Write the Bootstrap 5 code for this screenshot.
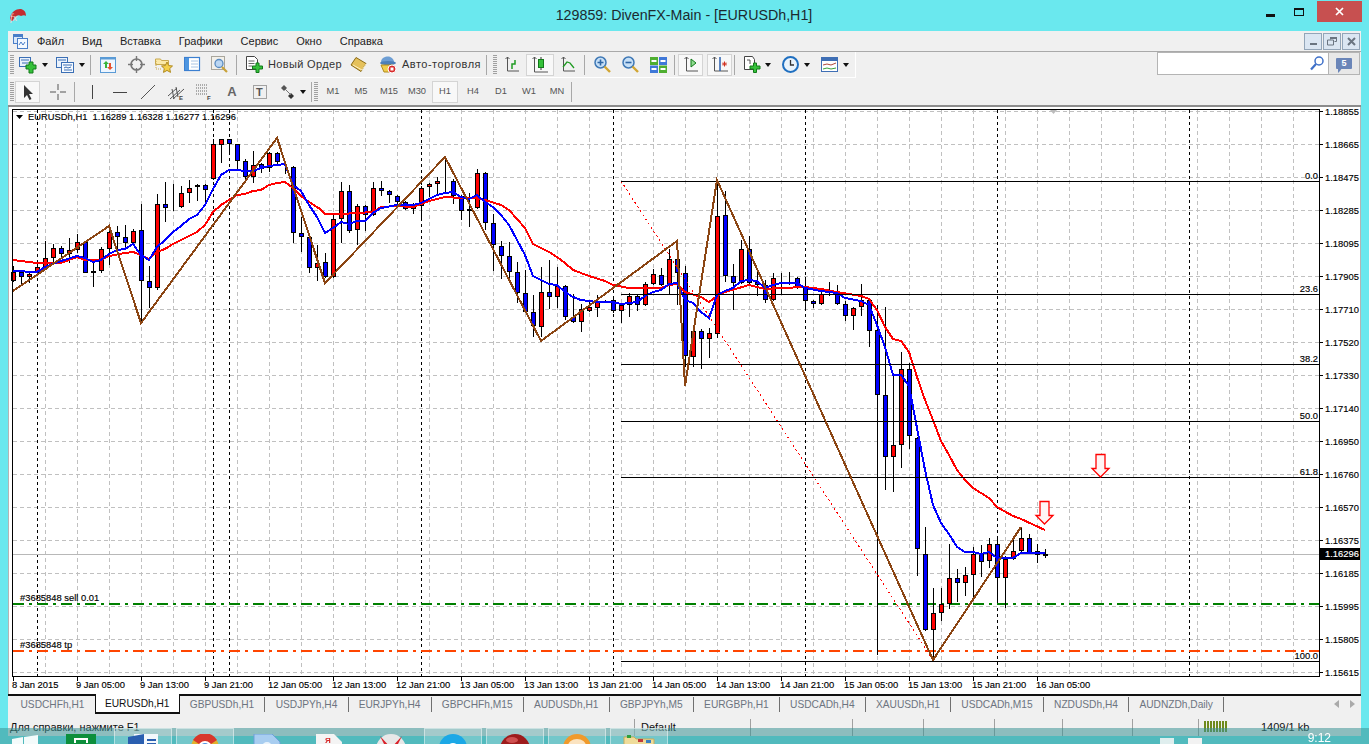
<!DOCTYPE html>
<html lang="ru">
<head>
<meta charset="UTF-8">
<title>129859: DivenFX-Main - [EURUSDh,H1]</title>
<link rel="stylesheet" href="https://cdn.jsdelivr.net/npm/bootstrap@5.3.0/dist/css/bootstrap.min.css">
<style>
  html, body { height: 744px; overflow: hidden; }
  body { background: #6ae8ee; font-family: "Liberation Sans", sans-serif; font-size: 11px; color: #222; }
  svg { display: block; flex: none; }

  .titlebar { height: 31px; position: relative; }
  .titlebar .logo { margin-left: 9px; margin-top: 9px; }
  .titlebar .caption { position: absolute; top: 5px; left: 0; right: 1px; text-align: center; font-size: 14.25px; line-height: 20px; color: #1c2a30; }
  .win-ctl { margin-left: auto; margin-right: 7px; height: 21px; margin-top: 1px; }
  .win-ctl span { display: flex; align-items: center; justify-content: center; }
  .win-ctl .min { width: 27px; padding-top: 7px; }
  .win-ctl .max { width: 29px; }
  .win-ctl .cls { width: 45px; background: #c75050; margin-left: 4px; }

  .mainwin { margin-left: 8px; width: 1353px; background: #f0f0f0; }
  .menubar { height: 21px; border-bottom: 1px solid #a9a9a9; padding-left: 5px; }
  .menubar a { color: #222; text-decoration: none; font-size: 11px; margin-left: 18px; }
  .menubar a:first-of-type { margin-left: 9px; }
  .mdi { margin-right: 1px; }
  .mdi span { width: 18px; height: 17px; margin-left: 1px; background: #dbe6f2; border: 1px solid #93a5b8; display: flex; align-items: center; justify-content: center; }

  .tbrow { height: 27px; }
  .tbrow.second { height: 28px; border-bottom: 2px solid #8c8c8c; }
  .toolbar { height: 26px; padding-right: 3px; border-right: 1px solid #fff; border-bottom: 1px solid #fff; }
  .grip { width: 4px; height: 20px; margin: 0 1px 0 2px; background: repeating-linear-gradient(#a0a0a0 0 1px, transparent 1px 2px); flex: none; }
  .sep { width: 1px; height: 20px; background: #a8a8a8; margin: 0 2px; flex: none; }
  .sep + .grip { margin-left: 0; }
  .tbtn { width: 28px; height: 22px; background: none; border: 0; padding: 0; border-radius: 0; display: flex; align-items: center; justify-content: center; color: #333; font-size: 11px; flex: none; }
  .sep + .tbtn { margin-left: 1px; }
  .tbtn.pressed { background: #f8f8f8; outline: 1px solid #d4d4d4; outline-offset: -1px; }
  .tbtn.wide { width: auto; gap: 5px; padding: 0 3px; letter-spacing: .35px; }
  .tbtn.wide.auto { letter-spacing: .5px; margin-left: 3px; }
  .tbtn.w20 { width: 20px; }
  .tbtn.w22 { width: 22px; }
  .tbtn.w24 { width: 24px; }
  .tbtn.w25 { width: 25px; }
  .tbtn.tf { width: 26px; margin: 0 1px; color: #555; font-size: 9.3px; }
  .tf + .sep { margin-left: 0; }
  .tbtn .letter { font-size: 13px; color: #666; font-weight: 700; }
  .dd { width: 6px; height: 4px; border: 3px solid transparent; border-top: 4px solid #111; border-bottom: 0; margin-left: 2px; margin-right: 3px; flex: none; box-sizing: border-box; }
  .dd.tight { margin-left: -2px; }

  .searchbox { width: 172px; height: 23px; background: #fff; border: 1px solid #b4b4b4; }
  .msgbtn { width: 31px; height: 23px; background: #e8e8e8; border: 1px solid #b4b4b4; border-left: 0; margin-right: 1px; }
  .msgbtn span { width: 16px; height: 11px; background: #6a85b8; color: #fff; font-size: 9px; line-height: 11px; text-align: center; border-radius: 1px; position: relative; font-weight: 700; }
  .msgbtn span::after { content: ""; position: absolute; left: 2px; bottom: -4px; border: 2px solid transparent; border-top: 3px solid #6a85b8; border-left: 2px solid #6a85b8; }

  .chart { background: #fff; border-left: 1px solid #b4b4b4; border-right: 1px solid #b4b4b4; height: 587px; }
  .chart text { font-family: "Liberation Sans", sans-serif; font-size: 9.4px; fill: #000; stroke: #000; stroke-width: .15px; }
  .chart text.inv { fill: #fff; stroke: #fff; }
  .chart .crisp { shape-rendering: crispEdges; }

  .symtabs { height: 20px; border-top: 2px solid #111; background: #f0f0f0; padding-left: 2px; flex-wrap: nowrap; }
  .symtabs .nav-link { padding: 0 10.2px; height: 15px; margin-top: 1px; line-height: 15px; color: #6d7480; font-size: 10.2px; border-right: 1px solid #707070; border-radius: 0; }
  .symtabs .nav-link.plain { border-right: 0; padding-left: 10.5px; padding-right: 10.5px; }
  .symtabs .nav-link.active { color: #111; background: #fff; height: 20px; margin-top: -2px; line-height: 20px; padding: 0 9px; border: 1px solid #111; border-top: 0; border-bottom-width: 2px; }
  .symtabs .arrows { margin-left: auto; margin-right: 6px; gap: 11px; height: 16px; }
  .symtabs .arrows i { width: 0; height: 0; border: 4px solid transparent; }
  .symtabs .arrows i.l { border-right: 5px solid #aaa; border-left: 0; }
  .symtabs .arrows i.r { border-left: 5px solid #aaa; border-right: 0; }

  .statusbar { height: 22px; position: relative; font-size: 11px; }
  .statusbar > div { height: 17px; margin-top: 5px; border-right: 1px solid #a0a0a0; padding-left: 6px; line-height: 16px; flex: none; white-space: nowrap; color: #111; }
  .statusbar > div:nth-child(1) { width: 627px; padding-left: 2px; }
  .statusbar > div:nth-child(2) { width: 116px; }
  .statusbar > div:nth-child(3) { width: 102px; }
  .statusbar > div:nth-child(4), .statusbar > div:nth-child(5) { width: 71px; }
  .statusbar > div:nth-child(6) { width: 68px; }
  .statusbar > div:nth-child(7) { width: 70px; }
  .statusbar > div:nth-child(8) { width: 66px; }
  .statusbar > div:nth-child(9) { border-right: 0; flex: 1; display: flex; gap: 34px; padding-left: 5px; }
  .bars { width: 23px; height: 11px; margin-top: 2px; background: repeating-linear-gradient(90deg, #6f8a1c 0 2px, transparent 2px 3px); }

  /* taskbar sits over the bottom of the window, translucent like aero */
  .taskbar { position: fixed; left: 0; right: 0; top: 728px; height: 16px; background: rgba(60, 147, 149, .55); overflow: hidden; }
  .taskbar .startbtn { width: 52px; padding: 7px 0 0 12px; }
  .taskbar .slot { width: 58px; height: 30px; margin-right: 4px; display: flex; justify-content: center; padding-top: 5px; border: 1px solid transparent; flex: none; }
  .taskbar .slot.on { background: rgba(255, 255, 255, .2); border-color: rgba(255, 255, 255, .45); }
  .taskbar .clock { position: absolute; right: 38px; top: 4px; line-height: 12px; color: #fff; font-size: 12px; }
  .taskbar .tray { position: absolute; left: 1160px; top: 10px; gap: 14px; }
</style>
</head>
<body>

<div class="titlebar d-flex">
  <svg class="logo" width="18" height="14" viewBox="0 0 18 14"><path d="M1 9C2 3 7 0 11 0c3 0 6 2 6 7-1-1-3-1-5 0C9 5 5 7 4 12 2 12 1 11 1 9z" fill="#c32c30"/><text x="1" y="12" font-family="Liberation Serif" font-style="italic" font-size="10" fill="#f4d6d0">fx</text></svg>
  <div class="caption">129859: DivenFX-Main - [EURUSDh,H1]</div>
  <div class="win-ctl d-flex">
    <span class="min"><svg width="9" height="3"><rect width="9" height="3" fill="#111"/></svg></span>
    <span class="max"><svg width="10" height="8"><rect x=".5" y="1" width="9" height="6.500" fill="none" stroke="#111"/><rect width="10" height="2" fill="#111"/></svg></span>
    <span class="cls"><svg width="9" height="9"><path d="M1 1l7 7M8 1L1 8" stroke="#fff" stroke-width="1.700"/></svg></span>
  </div>
</div>

<div class="mainwin">
  <nav class="menubar d-flex align-items-center">
    <svg width="15" height="15" viewBox="0 0 15 15"><rect x=".5" y=".5" width="9" height="9" fill="#dbe9fa" stroke="#4a7ec8"/><rect x="4.500" y="4.500" width="10" height="10" fill="#f4f9ff" stroke="#4a7ec8"/><rect x="1" y="1" width="8" height="2" fill="#4a7ec8"/><path d="M6 11l2-3 2 3 2-3" fill="none" stroke="#4a7ec8"/></svg>
    <a href="#">Файл</a>
    <a href="#">Вид</a>
    <a href="#">Вставка</a>
    <a href="#">Графики</a>
    <a href="#">Сервис</a>
    <a href="#">Окно</a>
    <a href="#">Справка</a>
    <div class="mdi d-flex ms-auto">
      <span><svg width="9" height="9"><rect x="1" y="6" width="7" height="2" fill="#6a7480"/></svg></span>
      <span><svg width="10" height="9"><path d="M3.500 2.500V.5h6v4h-2M.5 3h6v5h-6z" fill="none" stroke="#6a7480"/><rect x="3" width="7" height="2" fill="#6a7480"/></svg></span>
      <span><svg width="9" height="9"><path d="M1 1l7 7M8 1L1 8" stroke="#6a7480" stroke-width="2"/></svg></span>
    </div>
  </nav>

  <div class="tbrow d-flex align-items-start">
    <div class="toolbar d-flex align-items-center">
      <div class="grip me-1"></div>
      <button class="tbtn w20" type="button"><svg width="18" height="18" viewBox="0 0 18 18"><rect x=".5" y="1.500" width="11" height="9" fill="#eaf2fc" stroke="#3b6fb5"/><path d="M2 4h8M3 7h6" stroke="#3b6fb5"/><path d="M8 6h3V3h4v3h3v4h-3v4h-4v-4H8z" transform="translate(-1 3)" fill="#35c13a" stroke="#137a1a"/></svg></button>
      <i class="dd ms-1"></i>
      <button class="tbtn w20 ms-1" type="button"><svg width="18" height="18" viewBox="0 0 18 18"><rect x=".5" y="1.500" width="11" height="10" fill="#eaf2fc" stroke="#3b6fb5"/><rect x="5.500" y="6.500" width="12" height="10" fill="#f6faff" stroke="#3b6fb5"/><path d="M2 4h8M7 9h9M8 12l2-1 2 1 3-1M8 14h8" stroke="#3b6fb5" fill="none"/></svg></button>
      <i class="dd ms-1"></i>
      <div class="sep"></div>
      <button class="tbtn" type="button"><svg width="17" height="18" viewBox="0 0 17 18"><rect x=".5" y="1.500" width="15" height="15" fill="#eef6ff" stroke="#5b9bd6"/><rect x=".5" y="1.500" width="15" height="2" fill="#5b9bd6"/><path d="M5 12V8H3l3-3 3 3H7v4z" fill="#38b43c"/><path d="M9 7v4H7l3 3 3-3h-2V7z" fill="#e8522e"/></svg></button>
      <button class="tbtn" type="button"><svg width="17" height="17" viewBox="0 0 17 17"><circle cx="8.500" cy="8.500" r="5.500" fill="none" stroke="#777" stroke-width="1.600"/><path d="M8.500 0v5M8.500 12v5M0 8.500h5M12 8.500h5" stroke="#777" stroke-width="1.400"/></svg></button>
      <button class="tbtn" type="button"><svg width="19" height="18" viewBox="0 0 19 18"><path d="M.5 3h5l1 1.500h7v4h-13z" fill="#fbe9a8" stroke="#c9a94e"/><path d="M1 5v8h6" fill="none" stroke="#c9a94e" stroke-dasharray="1 1"/><path d="M12 6l1.700 3.600 3.800.4-2.800 2.600.8 3.800-3.500-2-3.500 2 .8-3.800L6.500 10l3.800-.4z" fill="#f5d04a" stroke="#b08a1f"/></svg></button>
      <button class="tbtn" type="button"><svg width="17" height="17" viewBox="0 0 17 17"><rect x=".5" y="1.500" width="15" height="13" fill="#fff" stroke="#3b7fd0" stroke-width="1.200"/><rect x="1" y="2" width="4" height="12" fill="#4d95e0"/><path d="M7 5h7M7 8h7M7 11h7" stroke="#a9c4e4"/></svg></button>
      <button class="tbtn" type="button"><svg width="18" height="18" viewBox="0 0 18 18"><rect x=".5" y=".5" width="13" height="13" fill="#f2f0ea" stroke="#a9a69c"/><circle cx="8" cy="7.500" r="4" fill="#bcd7f2" stroke="#5a8cc2" stroke-width="1.300"/><path d="M11 11l5 5" stroke="#c8a23a" stroke-width="2.200"/></svg></button>
      <div class="sep"></div>
      <button class="tbtn wide ms-1" type="button"><svg width="17" height="18" viewBox="0 0 17 18"><path d="M.5.5h8l3 3v10H.5z" fill="#fff" stroke="#444"/><path d="M2.500 5h6M2.500 7.500h6M2.500 10h4" stroke="#666"/><path d="M10 7h3v3h3.500v3H13v3.500h-3V13H6.500v-3H10z" fill="#35c13a" stroke="#137a1a"/></svg>Новый Ордер</button>
      <button class="tbtn" type="button"><svg width="17" height="15" viewBox="0 0 17 15"><path d="M6 .5l10 6-5 8L1 8z" fill="#e5c15b" stroke="#8a6a16"/><path d="M3 8l9 5 4-6" fill="none" stroke="#fff0c0"/></svg></button>
      <button class="tbtn wide auto" type="button"><svg width="18" height="18" viewBox="0 0 18 18"><path d="M2 6c0-4 4-5.500 7-5.500S15 3 15 6z" fill="#6d9ed4"/><ellipse cx="9" cy="7" rx="8" ry="2" fill="#4d7fb8"/><path d="M2 9h12l-1 7H5z" fill="#f0cd4c" stroke="#b08a1f"/><circle cx="13" cy="13" r="4" fill="#d92b2b" stroke="#fff"/><rect x="11.500" y="11.500" width="3" height="3" fill="#fff"/></svg>Авто-торговля</button>
      <div class="sep"></div>
      <div class="grip ms-1"></div>
      <button class="tbtn" type="button"><svg width="16" height="17" viewBox="0 0 16 17"><path d="M3.500 1v14H15M1.500 3l2-2 2 2" fill="none" stroke="#555"/><path d="M8 13V8h3V4" fill="none" stroke="#1f9b22" stroke-width="1.500"/></svg></button>
      <button class="tbtn pressed" type="button"><svg width="18" height="18" viewBox="0 0 18 18"><path d="M3.500 1v15H17M1.500 3l2-2 2 2" fill="none" stroke="#555"/><path d="M10 1v13" stroke="#333"/><rect x="7.500" y="3.500" width="5" height="8" fill="#35c13a" stroke="#137a1a"/></svg></button>
      <button class="tbtn" type="button"><svg width="16" height="17" viewBox="0 0 16 17"><path d="M3.500 1v14H15M1.500 3l2-2 2 2" fill="none" stroke="#555"/><path d="M3 11l4-5 3 1 4 5" fill="none" stroke="#1f9b22" stroke-width="1.300"/></svg></button>
      <div class="sep"></div>
      <button class="tbtn" type="button"><svg width="17" height="17" viewBox="0 0 17 17"><circle cx="6.500" cy="6.500" r="5.500" fill="#c7e0f7" stroke="#3f78b5" stroke-width="1.500"/><path d="M3.500 6.500h6M6.500 3.500v6" stroke="#2f66a5" stroke-width="1.600"/><path d="M10.500 10.500l5.500 5.500" stroke="#d1a634" stroke-width="2.400"/></svg></button>
      <button class="tbtn" type="button"><svg width="17" height="17" viewBox="0 0 17 17"><circle cx="6.500" cy="6.500" r="5.500" fill="#c7e0f7" stroke="#3f78b5" stroke-width="1.500"/><path d="M3.500 6.500h6" stroke="#2f66a5" stroke-width="1.600"/><path d="M10.500 10.500l5.500 5.500" stroke="#d1a634" stroke-width="2.400"/></svg></button>
      <button class="tbtn" type="button"><svg width="17" height="16" viewBox="0 0 17 16"><rect width="8" height="8" fill="#4fae30"/><rect x="9" width="8" height="8" fill="#3f78d8"/><rect y="8.500" width="8" height="7.500" fill="#3f78d8"/><rect x="9" y="8.500" width="8" height="7.500" fill="#4fae30"/><path d="M1.500 4h5M10.500 4h5M1.500 12h5M10.500 12h5" stroke="#fff" stroke-width="2"/></svg></button>
      <div class="sep"></div>
      <button class="tbtn pressed w25" type="button"><svg width="16" height="17" viewBox="0 0 16 17"><path d="M3.500 1v14H15M1.500 3l2-2 2 2" fill="none" stroke="#555"/><path d="M8 6l5 4-5 4z" fill="#8fdc8f" stroke="#137a1a" transform="translate(0 -3)"/></svg></button>
      <button class="tbtn pressed w25 ms-1" type="button"><svg width="18" height="17" viewBox="0 0 18 17"><path d="M3.500 1v14H17M1.500 3l2-2 2 2" fill="none" stroke="#555"/><path d="M9 1v14" stroke="#2a5fb0" stroke-width="1.500"/><path d="M11 8h5M13.500 5.500v5M12 6.500l3 3M15 6.500l-3 3" stroke="#d03020"/></svg></button>
      <div class="sep"></div>
      <button class="tbtn w22 ms-1" type="button"><svg width="17" height="18" viewBox="0 0 17 18"><path d="M.5.5h8l2 3v10H.5z" fill="#fff" stroke="#444"/><path d="M3 4h3v4" fill="none" stroke="#555"/><path d="M9.500 7h3v3H16v3h-3.500v3.500h-3V13H6v-3h3.500z" fill="#35c13a" stroke="#137a1a"/></svg></button>
      <i class="dd"></i>
      <button class="tbtn w24 ms-1" type="button"><svg width="17" height="17" viewBox="0 0 17 17"><circle cx="8.500" cy="8.500" r="7.500" fill="#e9f3fb" stroke="#1f6fc0" stroke-width="2"/><path d="M8.500 4v5H12" fill="none" stroke="#333" stroke-width="1.300"/></svg></button>
      <i class="dd"></i>
      <button class="tbtn w24 ms-1" type="button"><svg width="17" height="15" viewBox="0 0 17 15"><rect x=".5" y=".5" width="16" height="14" fill="#fff" stroke="#3f6fb5"/><rect x="1" y="1" width="15" height="3" fill="#3f6fb5"/><path d="M2 8l4-1 4 1 5-2" fill="none" stroke="#b0483a"/><path d="M2 12l4-1 4 1 5-1" fill="none" stroke="#38a23a"/></svg></button>
      <i class="dd"></i>
    </div>
    <div class="d-flex ms-auto">
      <div class="searchbox d-flex align-items-center justify-content-end pe-1"><svg width="14" height="15" viewBox="0 0 14 15"><circle cx="9" cy="5" r="4" fill="none" stroke="#3f70c8" stroke-width="1.500"/><path d="M6 8l-5 5.500" stroke="#3f70c8" stroke-width="2.200"/></svg></div>
      <div class="msgbtn d-flex align-items-center justify-content-center"><span>5</span></div>
    </div>
  </div>

  <div class="tbrow second d-flex align-items-start">
    <div class="toolbar d-flex align-items-center border-0">
      <div class="grip"></div>
      <button class="tbtn pressed w25" type="button"><svg width="10" height="15" viewBox="0 0 10 15"><path d="M1 0v13l3-3 2.500 5 2-1L6 9h4z" fill="#333"/></svg></button>
      <button class="tbtn ms-1" type="button"><svg width="16" height="16" viewBox="0 0 16 16"><path d="M8 0v6M8 10v6M0 8h6M10 8h6" stroke="#555"/></svg></button>
      <div class="sep"></div>
      <button class="tbtn" type="button"><svg width="3" height="14"><rect x="1" width="1" height="14" fill="#444"/></svg></button>
      <button class="tbtn" type="button"><svg width="14" height="3"><rect y="1" width="14" height="1" fill="#444"/></svg></button>
      <button class="tbtn" type="button"><svg width="14" height="14"><path d="M0 14L14 0" stroke="#555"/></svg></button>
      <button class="tbtn" type="button"><svg width="18" height="16" viewBox="0 0 18 16"><path d="M1 12l9-8M3 15l10-9M6 15l11-10M5 5l2 10M9 3l2 10" stroke="#555" fill="none"/><text x="12" y="16" font-size="6" font-weight="700" fill="#444">E</text></svg></button>
      <button class="tbtn" type="button"><svg width="18" height="16" viewBox="0 0 18 16"><path d="M1 1h12M1 4h12M1 7h12M1 10h12" stroke="#666" stroke-dasharray="1 1"/><text x="12" y="16" font-size="6" font-weight="700" fill="#444">F</text></svg></button>
      <button class="tbtn" type="button"><span class="letter">A</span></button>
      <button class="tbtn" type="button"><svg width="14" height="14" viewBox="0 0 14 14"><rect x=".5" y=".5" width="13" height="13" fill="none" stroke="#555" stroke-dasharray="1 1"/><text x="3" y="11" font-size="11" font-weight="700" fill="#555">T</text></svg></button>
      <button class="tbtn" type="button"><svg width="14" height="14" viewBox="0 0 14 14"><path d="M3 0l3 3-3 3-3-3z" fill="#555"/><path d="M10 8l3 3-3 3-3-3z" fill="#333"/><path d="M4 4l6 6" stroke="#777"/></svg></button>
      <i class="dd tight"></i>
      <div class="sep"></div>
      <div class="grip"></div>
      <button class="tbtn tf" type="button">M1</button>
      <button class="tbtn tf" type="button">M5</button>
      <button class="tbtn tf" type="button">M15</button>
      <button class="tbtn tf" type="button">M30</button>
      <button class="tbtn tf pressed" type="button">H1</button>
      <button class="tbtn tf" type="button">H4</button>
      <button class="tbtn tf" type="button">D1</button>
      <button class="tbtn tf" type="button">W1</button>
      <button class="tbtn tf" type="button">MN</button>
      <div class="sep"></div>
    </div>
  </div>

  <div class="chart"><svg id="chart" width="1351" height="587" viewBox="9 107 1351 587"></svg></div>

  <ul class="nav symtabs d-flex align-items-start">
    <li><a class="nav-link plain" href="#">USDCHFh,H1</a></li>
    <li><a class="nav-link active" href="#">EURUSDh,H1</a></li>
    <li><a class="nav-link" href="#">GBPUSDh,H1</a></li>
    <li><a class="nav-link" href="#">USDJPYh,H4</a></li>
    <li><a class="nav-link" href="#">EURJPYh,H4</a></li>
    <li><a class="nav-link" href="#">GBPCHFh,M15</a></li>
    <li><a class="nav-link" href="#">AUDUSDh,H1</a></li>
    <li><a class="nav-link" href="#">GBPJPYh,M5</a></li>
    <li><a class="nav-link" href="#">EURGBPh,H1</a></li>
    <li><a class="nav-link" href="#">USDCADh,H4</a></li>
    <li><a class="nav-link" href="#">XAUUSDh,H1</a></li>
    <li><a class="nav-link" href="#">USDCADh,M15</a></li>
    <li><a class="nav-link" href="#">NZDUSDh,H4</a></li>
    <li><a class="nav-link" href="#">AUDNZDh,Daily</a></li>
    <li class="arrows d-flex align-items-center"><i class="l"></i><i class="r"></i></li>
  </ul>

  <div class="statusbar d-flex">
    <div>Для справки, нажмите F1</div>
    <div>Default</div>
    <div></div><div></div><div></div><div></div><div></div><div></div>
    <div><span class="bars"></span><span>1409/1 kb</span></div>
  </div>
</div>

<div class="taskbar d-flex">
  <div class="startbtn"><svg width="26" height="16" viewBox="0 0 26 16"><path d="M0 4l11-2v14H0zM12 2l14-2v16H12z" fill="#f4fbfb"/></svg></div>
  <div class="slot"><svg width="30" height="20" viewBox="0 0 30 20"><rect width="30" height="20" fill="#0d8f3c"/><path d="M9 9V5h12v4" fill="none" stroke="#fff" stroke-width="2"/></svg></div>
  <div class="slot on"><svg width="30" height="20" viewBox="0 0 30 20"><rect x="6" width="24" height="20" fill="#f4f8fc"/><path d="M0 3l16-3v20H0z" fill="#2a5fb0"/><path d="M19 6h9M19 10h9" stroke="#2a5fb0" stroke-width="2"/></svg></div>
  <div class="slot on"><svg width="30" height="20" viewBox="0 0 30 20"><circle cx="15" cy="14" r="14" fill="#e2b22c"/><path d="M15 14L3 6a14 14 0 0 1 24 0z" fill="#d8372b"/><circle cx="15" cy="14" r="6" fill="#4a8ee0" stroke="#fff" stroke-width="2"/></svg></div>
  <div class="slot"><svg width="30" height="20" viewBox="0 0 30 20"><path d="M2 0h18l8 8v12H2z" fill="#a8cdf0" stroke="#6d9fd8"/><circle cx="15" cy="13" r="5" fill="#e9f3fb"/></svg></div>
  <div class="slot"><svg width="26" height="20" viewBox="0 0 26 20"><path d="M0 0h18l8 8v12H0z" fill="#f4f4f4"/><text x="9" y="8.500" font-size="8" font-weight="700" fill="#d62a2a">Я</text></svg></div>
  <div class="slot"><svg width="30" height="20" viewBox="0 0 30 20"><circle cx="15" cy="15" r="15" fill="#e8e8e8"/><path d="M4 2l11 12L26 2 17 20h-4z" fill="#d9222a"/></svg></div>
  <div class="slot on"><svg width="28" height="20" viewBox="0 0 28 20"><circle cx="14" cy="14" r="14" fill="#1ba8e6"/><circle cx="14" cy="15" r="6" fill="#fff"/></svg></div>
  <div class="slot on"><svg width="30" height="20" viewBox="0 0 30 20"><circle cx="15" cy="15" r="15" fill="#9e1c1c"/><ellipse cx="12" cy="6" rx="6" ry="3" fill="#d05050"/></svg></div>
  <div class="slot on"><svg width="28" height="20" viewBox="0 0 28 20"><circle cx="14" cy="14" r="14" fill="#f09a2c"/><ellipse cx="14" cy="12" rx="9" ry="7" fill="#fbe3c0"/></svg></div>
  <div class="slot on"><svg width="32" height="20" viewBox="0 0 32 20"><path d="M1 3h10l2 2h18v15H1z" fill="#efdc9a" stroke="#c9ac5a"/><rect x="4" y="1" width="4" height="3" fill="#2ea03a"/><rect x="15" y="5" width="5" height="3" fill="#c23a3a"/><rect x="23" y="6" width="5" height="3" fill="#3a80c2"/></svg></div>
  <div class="tray d-flex"><svg width="14" height="6"><rect width="14" height="6" fill="#dfeeee"/></svg><svg width="14" height="6"><rect width="14" height="6" fill="#f2f2f2"/></svg></div>
  <div class="clock">9:12</div>
</div>

<script>
  // [colour, body top, body bottom, high, low] in page pixels, x = 13 + 8*i
  const candles = [
    ["r",272,281,266,282],["b",272,277,270,284],["r",274,277,273,283],["r",267,273,264,276],["r",258,268,241,270],
    ["r",248,258,244,263],["b",248,254,246,258],["r",250,254,238,263],["r",242,250,234,253],["b",242,273,242,273],
    ["r",271,273,262,287],["r",249,271,247,273],["r",232,249,227,265],["b",232,237,226,253],["b",237,243,225,248],
    ["r",231,243,229,244],["b",230,281,204,323],["b",281,288,266,308],["r",204,288,194,290],["b",204,208,182,222],
    ["k",208,209,184,211],["r",193,207,186,208],["r",188,193,180,203],["r",185,187,184,201],["b",185,190,184,205],
    ["r",144,179,139,180],["r",139,145,139,163],["b",139,144,139,154],["b",144,161,144,170],["b",161,177,159,181],
    ["r",165,177,151,183],["b",164,169,163,173],["r",153,168,152,172],["b",153,162,152,164],["k",164,165,162,174],
    ["b",167,233,166,243],["b",233,237,217,252],["b",237,268,236,273],["r",263,268,245,281],
    ["b",262,277,253,278],["r",219,277,215,278],["r",191,219,182,243],["b",191,231,185,233],["r",206,230,204,245],
    ["b",206,215,205,231],["r",188,215,182,216],["b",188,191,181,196],["b",191,195,190,203],["b",196,202,195,208],
    ["b",202,209,201,210],["r",206,209,203,214],["r",188,206,186,221],["r",184,187,183,197],["r",181,184,177,194],
    ["k",181,182,158,193],["b",181,196,179,204],["b",196,211,195,220],["r",209,211,193,227],["r",173,208,169,209],
    ["b",173,223,172,230],["b",223,245,214,271],["b",246,256,241,279],["b",256,272,242,279],["b",272,293,262,303],
    ["b",293,312,270,313],["b",312,326,295,337],["r",292,327,267,337],["b",292,297,260,309],["r",286,297,267,308],
    ["b",286,317,285,320],["b",317,322,294,323],["r",309,322,304,332],["r",307,311,300,312],["r",302,308,295,317],
    ["k",301,302,300,303],["b",300,311,299,313],["r",305,311,303,323],["r",296,305,293,317],["b",296,305,295,311],
    ["r",284,305,282,306],["r",274,284,269,285],["b",275,285,268,286],["r",259,285,249,294],["b",259,273,240,305],
    ["b",273,356,266,367],["r",331,357,330,367],["b",331,339,329,369],["r",333,339,328,358],["r",216,334,180,338],
    ["b",215,276,191,282],["b",276,283,264,310],["r",249,283,240,284],["b",249,283,236,284],["b",282,285,270,296],
    ["b",285,300,280,303],["r",278,300,273,301],["k",278,279,273,294],["k",278,279,272,285],["b",278,288,277,289],
    ["b",288,301,277,310],["b",301,304,300,308],["r",294,304,291,305],["k",293,294,282,296],["b",294,304,285,305],
    ["b",304,316,301,321],["r",308,316,307,330],["r",300,307,284,316],["b",300,331,298,347],["b",330,395,305,655],
    ["b",395,457,307,490],["r",445,457,375,492],["r",369,445,352,468],["b",369,436,363,449],["b",438,549,437,576],
    ["b",554,630,527,631],["r",613,630,588,660],["r",604,613,588,621],["r",578,604,544,609],["b",578,583,569,602],
    ["r",575,583,567,596],["r",554,575,547,597],["b",554,562,545,577],["r",544,561,538,568],["b",544,578,538,603],
    ["r",559,578,556,608],["r",551,559,540,560],["r",538,551,527,552],["b",538,553,534,554],["b",551,555,544,563],
    ["k",554,556,549,558]
  ];
  const blueMa = "13,271 37,272 45,267 61,261 77,256 85,258 93,262 101,260 109,254 117,250 125,249 133,244 141,255 149,260 157,247 165,240 173,232 181,226 189,219 197,215 205,205 213,189 221,175 229,170 237,170 245,171 253,171 261,168 269,166 277,165 285,164 293,185 301,191 309,205 317,217 325,233 333,228 341,222 349,224 357,221 365,221 373,213 381,208 397,205 413,205 421,203 437,195 445,193 453,192 461,197 469,199 477,195 485,202 493,207 501,215 509,225 517,240 525,255 533,276 541,280 549,284 557,285 565,292 573,297 581,300 597,302 613,302 621,304 637,302 645,296 653,292 661,290 669,284 677,283 685,300 693,303 701,312 709,318 717,295 725,291 733,288 741,281 749,280 757,281 765,288 773,285 781,283 797,283 805,288 821,291 837,293 845,298 861,301 869,305 877,325 885,347 893,375 901,375 909,386 917,428 925,470 933,505 941,523 949,534 957,547 965,552 973,552 981,554 989,552 997,558 1013,558 1021,553 1045,553";
  const redMa = "13,260 21,261 37,263 61,263 77,257 85,260 101,260 109,256 125,253 133,252 141,255 149,259 157,252 165,249 173,244 181,240 189,236 197,232 205,225 213,212 221,205 229,200 237,195 245,194 253,191 261,190 269,185 277,183 285,182 293,188 301,196 309,202 320,209 325,214 341,214 357,213 373,212 381,207 397,206 413,207 429,201 445,197 461,198 477,198 485,200 501,205 509,210 525,228 533,244 549,252 557,257 565,263 573,270 589,276 605,281 613,285 629,288 645,288 661,288 669,285 677,284 685,292 701,297 709,302 717,296 725,292 749,285 765,289 781,288 805,287 821,289 837,292 861,296 869,299 877,310 885,327 893,339 901,341 909,352 917,377 925,400 933,420 941,441 949,455 957,470 965,480 973,488 989,498 997,507 1013,516 1021,519 1045,530";
  const zigzag = "13,291 109,226 141,323 277,138 325,283 445,157 541,341 677,241 685,386 717,180 933,660 1021,527";
  const prices = ["1.18855","1.18665","1.18475","1.18285","1.18095","1.17905","1.17710","1.17520","1.17330","1.17140","1.16950","1.16760","1.16570","1.16375","1.16185","1.15995","1.15805","1.15615"];
  const times = ["8 Jan 2015","9 Jan 05:00","9 Jan 13:00","9 Jan 21:00","12 Jan 05:00","12 Jan 13:00","12 Jan 21:00","13 Jan 05:00","13 Jan 13:00","13 Jan 21:00","14 Jan 05:00","14 Jan 13:00","14 Jan 21:00","15 Jan 05:00","15 Jan 13:00","15 Jan 21:00","16 Jan 05:00"];
  const fibs = [[181,"0.0"],[294,"23.6"],[364,"38.2"],[421,"50.0"],[477,"61.8"],[661,"100.0"]];
  const colours = { r: "#ff0000", b: "#0000ff", k: "#000" };

  const line = (x1, y1, x2, y2, colour, extra = "") => `<line x1="${x1}" y1="${y1}" x2="${x2}" y2="${y2}" stroke="${colour}" ${extra}/>`;
  const text = (x, y, s, extra = "") => `<text x="${x}" y="${y}" ${extra}>${s}</text>`;
  const arrow = (x, y) => `<path d="M${x - 4.5} ${y + .5}h9v14h4l-8.500 8.500-8.500-8.500h4z" fill="#fff4f4" stroke="#f00" stroke-width="1.300"/>`;

  let g = '<g class="crisp">';
  // grid
  for (let i = 0; i < 18; i++) g += line(13, 111.5 + i * 33, 1319, 111.5 + i * 33, "#c0c0c0", 'stroke-dasharray="4 3"');
  for (let x = 45.5; x < 1319; x += 32) g += line(x, 110, x, 676, "#c0c0c0", 'stroke-dasharray="4 3"');
  // period separators
  [37, 213, 229, 421, 613, 805, 997, 1189].forEach(x => { g += line(x + .5, 110, x + .5, 676, "#000", 'stroke-dasharray="3 3"'); });
  // bid line and order lines
  g += line(13, 554.5, 1319, 554.5, "#b8b8b8");
  g += line(13, 604, 1319, 604, "#008000", 'stroke-width="2" stroke-dasharray="11 5 3 5"');
  g += line(13, 651, 1319, 651, "#ff4500", 'stroke-width="2" stroke-dasharray="11 5 3 5"');
  // candles
  candles.forEach((c, i) => {
    const x = 13 + 8 * i;
    g += line(x + .5, c[3], x + .5, c[4], "#000");
    g += `<rect x="${x - 2 + .5}" y="${c[1] + .5}" width="4" height="${Math.max(c[2] - c[1] - 1, 0)}" fill="${colours[c[0]]}" stroke="#000"/>`;
  });
  g += `<polyline points="${redMa}" fill="none" stroke="#ff0000" stroke-width="2"/>`;
  g += `<polyline points="${blueMa}" fill="none" stroke="#0000ff" stroke-width="2"/>`;
  // fibo levels
  g += line(621, 181, 933, 660, "#ff0000", 'stroke-dasharray="2 3"');
  fibs.forEach(f => { g += line(621, f[0] + .5, 1319, f[0] + .5, "#000"); });
  g += `<polyline points="${zigzag}" fill="none" stroke="#8b4513" stroke-width="2"/>`;
  // plot frame and axis ticks
  g += line(12.5, 109, 12.5, 676, "#000") + line(1319.5, 109, 1319.5, 677, "#000");
  g += line(12, 109.5, 1320, 109.5, "#000") + line(12, 676.5, 1320, 676.5, "#000");
  prices.forEach((p, i) => { g += line(1320, 111.5 + i * 33, 1323, 111.5 + i * 33, "#000"); });
  times.forEach((t, i) => { g += line(13.5 + i * 64, 677, 13.5 + i * 64, 681, "#000"); });
  g += '</g>';
  g += arrow(1100.5, 454) + arrow(1044.5, 501);
  g += '<path d="M1050 110h7l-3.500 4z" fill="#bbb"/>';

  prices.forEach((p, i) => { g += text(1325, 114.5 + i * 33, p); });
  times.forEach((t, i) => { g += text(12 + i * 64, 688, t); });
  fibs.forEach(f => { g += text(1318, f[0] - 2, f[1], 'text-anchor="end"'); });
  g += '<path d="M16 115h7l-3.500 4z" fill="#000"/>';
  g += text(28, 120, "EURUSDh,H1&#160;&#160;1.16289 1.16328 1.16277 1.16296");
  g += text(20, 601, "#3685848 sell 0.01") + text(20, 648, "#3685848 tp");
  g += '<rect x="1320" y="548" width="40" height="12" fill="#000"/>';
  g += text(1325, 557, "1.16296", 'class="inv"');
  document.getElementById("chart").innerHTML = g;
</script>
<script src="https://cdn.jsdelivr.net/npm/bootstrap@5.3.0/dist/js/bootstrap.bundle.min.js"></script>
</body>
</html>
